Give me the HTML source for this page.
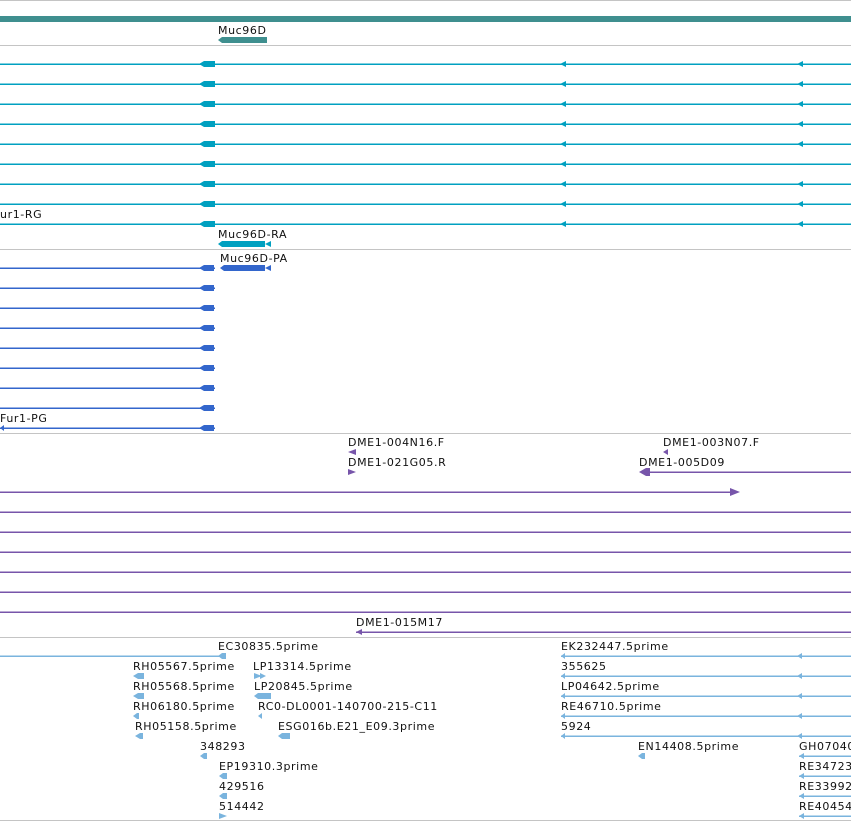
<!DOCTYPE html>
<html><head><meta charset="utf-8"><style>
html,body{margin:0;padding:0;background:#fff;width:851px;height:821px;overflow:hidden}
svg{display:block}
text{font-family:"DejaVu Sans","Liberation Sans",sans-serif;font-size:11px;letter-spacing:0.6px;fill:#111}
</style></head><body>
<svg width="851" height="821" viewBox="0 0 851 821">
<g fill="#c4c4c4">
<rect x="0" y="0" width="851" height="1"/>
<rect x="0" y="45" width="851" height="1"/>
<rect x="0" y="249" width="851" height="1"/>
<rect x="0" y="433" width="851" height="1"/>
<rect x="0" y="637" width="851" height="1"/>
<rect x="0" y="820" width="851" height="1"/>
</g>
<rect x="0" y="16" width="851" height="6" fill="#3f8f8f"/>
<text x="218" y="34">Muc96D</text>
<polygon points="218,40 222,37 267,37 267,43 222,43" fill="#3f8f8f"/>

<g fill="#00a0c0">
<rect x="0" y="63.5" width="851" height="1.5"/>
<rect x="0" y="83.5" width="851" height="1.5"/>
<rect x="0" y="103.5" width="851" height="1.5"/>
<rect x="0" y="123.5" width="851" height="1.5"/>
<rect x="0" y="143.5" width="851" height="1.5"/>
<rect x="0" y="163.5" width="851" height="1.5"/>
<rect x="0" y="183.5" width="851" height="1.5"/>
<rect x="0" y="203.5" width="851" height="1.5"/>
<rect x="0" y="223.5" width="851" height="1.5"/>
<polygon points="199,64 204,61 215,61 215,67 204,67"/>
<polygon points="199,84 204,81 215,81 215,87 204,87"/>
<polygon points="199,104 204,101 215,101 215,107 204,107"/>
<polygon points="199,124 204,121 215,121 215,127 204,127"/>
<polygon points="199,144 204,141 215,141 215,147 204,147"/>
<polygon points="199,164 204,161 215,161 215,167 204,167"/>
<polygon points="199,184 204,181 215,181 215,187 204,187"/>
<polygon points="199,204 204,201 215,201 215,207 204,207"/>
<polygon points="199,224 204,221 215,221 215,227 204,227"/>
<polygon points="560,64 566,61 566,67"/><polygon points="797,64 803,61 803,67"/>
<polygon points="560,84 566,81 566,87"/><polygon points="797,84 803,81 803,87"/>
<polygon points="560,104 566,101 566,107"/><polygon points="797,104 803,101 803,107"/>
<polygon points="560,124 566,121 566,127"/><polygon points="797,124 803,121 803,127"/>
<polygon points="560,144 566,141 566,147"/><polygon points="797,144 803,141 803,147"/>
<polygon points="560,164 566,161 566,167"/>
<polygon points="560,184 566,181 566,187"/><polygon points="797,184 803,181 803,187"/>
<polygon points="560,204 566,201 566,207"/><polygon points="797,204 803,201 803,207"/>
<polygon points="560,224 566,221 566,227"/><polygon points="797,224 803,221 803,227"/>
<polygon points="218,244 222,241 265,241 265,247 222,247"/>
<polygon points="265,244 271,241 271,247"/>
</g>
<text x="0" y="218">ur1-RG</text>
<text x="218" y="238">Muc96D-RA</text>

<g fill="#3366cc">
<rect x="0" y="267.5" width="215" height="1.5"/>
<rect x="0" y="287.5" width="215" height="1.5"/>
<rect x="0" y="307.5" width="215" height="1.5"/>
<rect x="0" y="327.5" width="215" height="1.5"/>
<rect x="0" y="347.5" width="215" height="1.5"/>
<rect x="0" y="367.5" width="215" height="1.5"/>
<rect x="0" y="387.5" width="215" height="1.5"/>
<rect x="0" y="407.5" width="215" height="1.5"/>
<rect x="0" y="427.5" width="215" height="1.5"/>
<polygon points="199,268 204,265 214,265 214,271 204,271"/>
<polygon points="199,288 204,285 214,285 214,291 204,291"/>
<polygon points="199,308 204,305 214,305 214,311 204,311"/>
<polygon points="199,328 204,325 214,325 214,331 204,331"/>
<polygon points="199,348 204,345 214,345 214,351 204,351"/>
<polygon points="199,368 204,365 214,365 214,371 204,371"/>
<polygon points="199,388 204,385 214,385 214,391 204,391"/>
<polygon points="199,408 204,405 214,405 214,411 204,411"/>
<polygon points="199,428 204,425 214,425 214,431 204,431"/>
<polygon points="0,428 4,425 4,431"/>
<polygon points="220,268 224,265 265,265 265,271 224,271"/>
<polygon points="265,268 271,265 271,271"/>
</g>
<text x="220" y="262">Muc96D-PA</text>
<text x="0" y="422">Fur1-PG</text>

<g fill="#7755aa">
<polygon points="348,452 356,449 356,455"/>
<polygon points="348,469 356,472 348,475"/>
<polygon points="663,452 668,449 668,455"/>
<rect x="645" y="471.5" width="206" height="1.5"/>
<polygon points="639,472 646,468 650,468 650,476 646,476"/>
<rect x="0" y="491.5" width="732" height="1.5"/>
<polygon points="730,488 740,492 730,496"/>
<rect x="0" y="511.5" width="851" height="1.5"/>
<rect x="0" y="531.5" width="851" height="1.5"/>
<rect x="0" y="551.5" width="851" height="1.5"/>
<rect x="0" y="571.5" width="851" height="1.5"/>
<rect x="0" y="591.5" width="851" height="1.5"/>
<rect x="0" y="611.5" width="851" height="1.5"/>
<rect x="356" y="631.5" width="495" height="1.5"/>
<polygon points="356,632 362,629 362,635"/>
</g>
<text x="348" y="446">DME1-004N16.F</text>
<text x="348" y="466">DME1-021G05.R</text>
<text x="663" y="446">DME1-003N07.F</text>
<text x="639" y="466">DME1-005D09</text>
<text x="356" y="626">DME1-015M17</text>

<g fill="#7ab4de">
<rect x="0" y="655.5" width="226" height="1.5"/>
<polygon points="218,656 222,653 226,653 226,659 222,659"/>
<polygon points="133,676 138,673 144,673 144,679 138,679"/>
<polygon points="133,696 138,693 144,693 144,699 138,699"/>
<polygon points="133,716 137,713 139,713 139,719 137,719"/>
<polygon points="135,736 140,733 143,733 143,739 140,739"/>
<polygon points="200,756 204,753 207,753 207,759 204,759"/>
<polygon points="219,776 223,773 227,773 227,779 223,779"/>
<polygon points="219,796 223,793 227,793 227,799 223,799"/>
<polygon points="219,813 227,816 219,819"/>
<polygon points="254,673 262,676 254,679"/><polygon points="260,673 266,676 260,679"/>
<polygon points="254,696 258,693 271,693 271,699 258,699"/>
<polygon points="258,716 262,713 262,719"/>
<polygon points="278,736 282,733 290,733 290,739 282,739"/>
<polygon points="638,756 642,753 645,753 645,759 642,759"/>
<rect x="561" y="655.5" width="290" height="1.5"/>
<rect x="561" y="675.5" width="290" height="1.5"/>
<rect x="561" y="695.5" width="290" height="1.5"/>
<rect x="561" y="715.5" width="290" height="1.5"/>
<rect x="561" y="735.5" width="290" height="1.5"/>
<polygon points="561,656 565,653 565,659"/><polygon points="797,656 802,653 802,659"/>
<polygon points="561,676 565,673 565,679"/><polygon points="797,676 802,673 802,679"/>
<polygon points="561,696 565,693 565,699"/><polygon points="797,696 802,693 802,699"/>
<polygon points="561,716 565,713 565,719"/><polygon points="797,716 802,713 802,719"/>
<polygon points="561,736 565,733 565,739"/><polygon points="797,736 802,733 802,739"/>
<rect x="799" y="755.5" width="52" height="1.5"/>
<rect x="799" y="775.5" width="52" height="1.5"/>
<rect x="799" y="795.5" width="52" height="1.5"/>
<rect x="799" y="815.5" width="52" height="1.5"/>
<polygon points="799,756 804,753 804,759"/>
<polygon points="799,776 804,773 804,779"/>
<polygon points="799,796 804,793 804,799"/>
<polygon points="799,816 804,813 804,819"/>
</g>
<text x="218" y="650">EC30835.5prime</text>
<text x="133" y="670">RH05567.5prime</text>
<text x="133" y="690">RH05568.5prime</text>
<text x="133" y="710">RH06180.5prime</text>
<text x="135" y="730">RH05158.5prime</text>
<text x="200" y="750">348293</text>
<text x="219" y="770">EP19310.3prime</text>
<text x="219" y="790">429516</text>
<text x="219" y="810">514442</text>
<text x="253" y="670">LP13314.5prime</text>
<text x="254" y="690">LP20845.5prime</text>
<text x="258" y="710">RC0-DL0001-140700-215-C11</text>
<text x="278" y="730">ESG016b.E21_E09.3prime</text>
<text x="561" y="650">EK232447.5prime</text>
<text x="561" y="670">355625</text>
<text x="561" y="690">LP04642.5prime</text>
<text x="561" y="710">RE46710.5prime</text>
<text x="561" y="730">5924</text>
<text x="638" y="750">EN14408.5prime</text>
<text x="799" y="750">GH07040</text>
<text x="799" y="770">RE34723</text>
<text x="799" y="790">RE33992</text>
<text x="799" y="810">RE40454</text>
</svg>
</body></html>
